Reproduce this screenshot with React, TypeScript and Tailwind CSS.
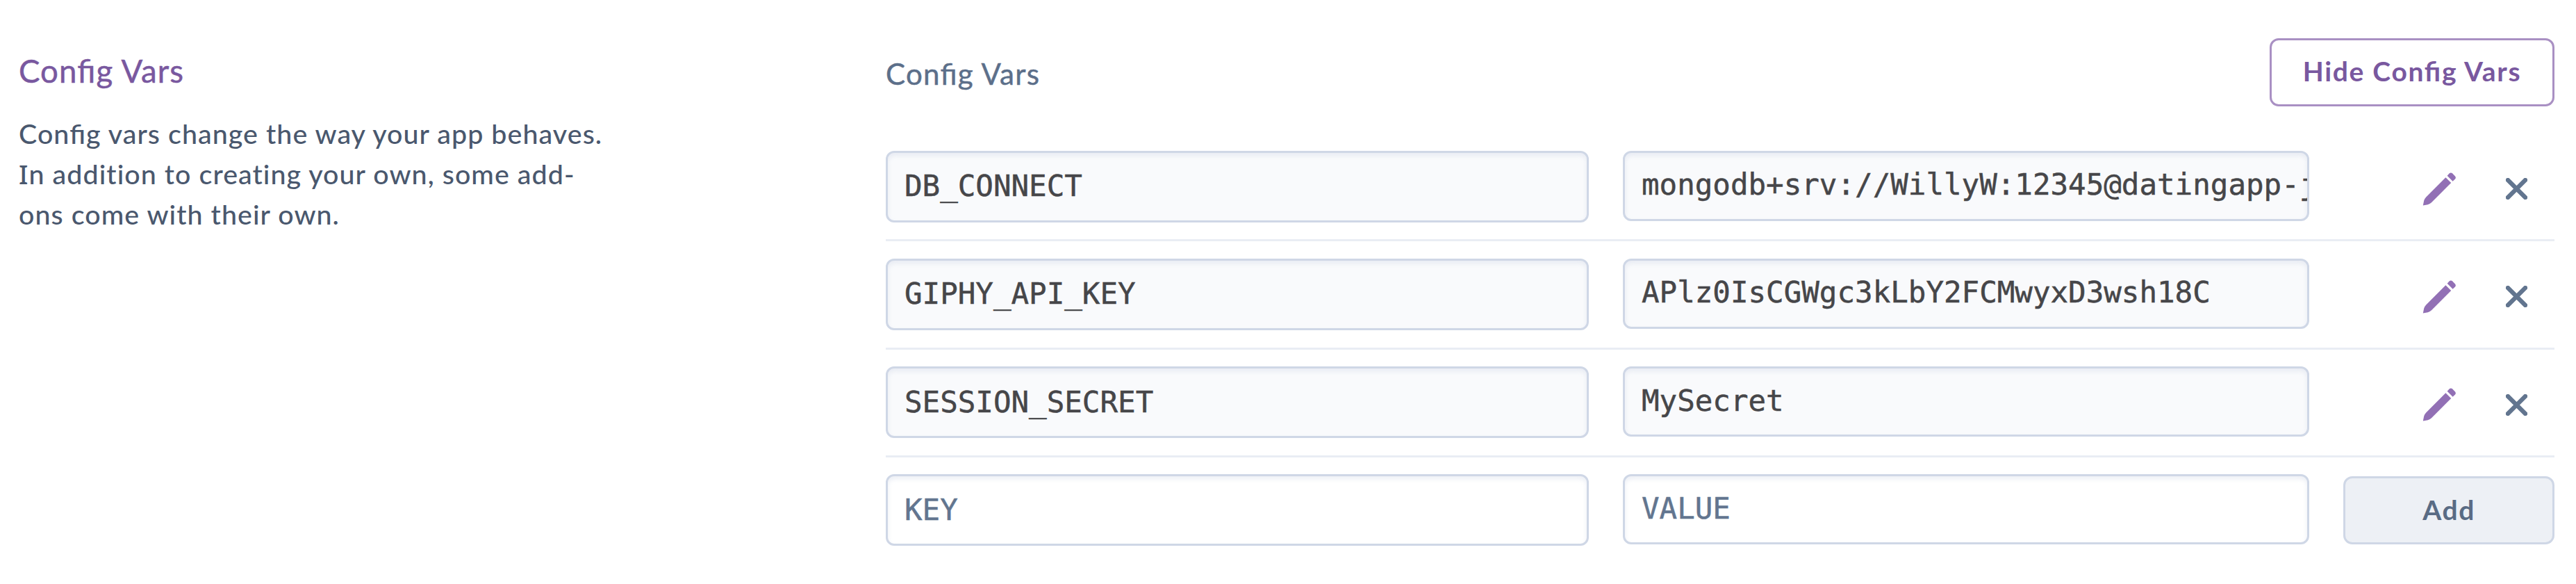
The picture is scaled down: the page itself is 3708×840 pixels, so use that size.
type ConfigVar = { key: string; value: string };

const VARS: ConfigVar[] = [
  { key: "DB_CONNECT", value: "mongodb+srv://WillyW:12345@datingapp-j" },
  { key: "GIPHY_API_KEY", value: "APlz0IsCGWgc3kLbY2FCMwyxD3wsh18C" },
  { key: "SESSION_SECRET", value: "MySecret" },
];

const FIELD =
  "box-border flex shrink-0 items-center overflow-hidden whitespace-pre rounded-[12px] border-[3px] border-[#cfd7e6] pl-[24px] font-['DejaVu_Sans_Mono',monospace] text-[42.5px] leading-[50px] [-webkit-text-stroke:0.5px] shadow-[inset_0_4px_6px_rgba(207,215,230,0.4)]";

// Keeps the "fi" ligature while the surrounding text is letter-spaced.
function Config() {
  return <span className="[font-feature-settings:'liga']">Config</span>;
}

function Field({ text, kind, filled }: { text: string; kind: "key" | "value"; filled: boolean }) {
  const size = kind === "key" ? "h-[103px] w-[1012px]" : "h-[101px] w-[988px] pb-[2px]";
  const tone = filled ? "bg-[#f9fafc] text-[#464649]" : "bg-white text-[#62758f]";
  return <div className={`${FIELD} ${size} ${tone}`}>{text}</div>;
}

function PencilIcon() {
  return (
    <svg className="h-[50px] w-[50px]" viewBox="0 0 50 50">
      <g fill="#9270b5">
        <path d="M0.8 48.4 L2.2 41.6 Q3 38.6 5.2 36.4 L33.4 8.2 L41.2 16 L13 44.2 Q10.8 46.4 7.8 47.2 Z" />
        <path d="M35.6 5.8 L38.6 2.6 Q40.9 0.5 43.2 2.6 L46.8 6.2 Q48.9 8.5 46.8 10.8 L43.6 13.8 Z" />
      </g>
    </svg>
  );
}

function CrossIcon() {
  return (
    <svg className="h-[31px] w-[31px]" viewBox="0 0 31 31">
      <path d="M3 3 L28 28 M28 3 L3 28" stroke="#62758f" strokeWidth="6.2" strokeLinecap="square" fill="none" />
    </svg>
  );
}

function Row({ item }: { item: ConfigVar }) {
  return (
    <div className="box-border flex h-[155.3px] items-start border-b-[3px] border-[#e9edf4] pt-[24.6px]">
      <Field text={item.key} kind="key" filled />
      <div className="ml-[49px] flex">
        <Field text={item.value} kind="value" filled />
      </div>
      <div className="ml-[163px] flex h-[110px] items-center">
        <PencilIcon />
        <div className="ml-[70px] flex">
          <CrossIcon />
        </div>
      </div>
    </div>
  );
}

export default function App() {
  return (
    <div className="flex h-[840px] w-[3708px] overflow-hidden bg-white font-['Lato',sans-serif]">
      <aside className="w-[1275px] shrink-0 pl-[27px] pt-[73px]">
        <h2 className="text-[45.6px] leading-[58px] tracking-[1.1px] text-[#79589f] [-webkit-text-stroke:0.5px]">
          <Config /> Vars
        </h2>
        <p className="mt-[32px] whitespace-nowrap text-[39.4px] font-medium leading-[58px] tracking-[1.05px] text-[#4a586e]">
          <Config /> vars change the way your app behaves.
          <br />
          <span className="font-['Noto_Sans',sans-serif] text-[38px] leading-none">I</span>n addition to creating your own, some add-
          <br />
          ons come with their own.
        </p>
      </aside>
      <main className="w-[2402px] shrink-0 pt-[55px]">
        <header className="flex h-[98px] items-start justify-between">
          <h3 className="pt-[22px] text-[42px] leading-[58px] tracking-[1.3px] text-[#5c6f8a] [-webkit-text-stroke:0.5px]">
            <Config /> Vars
          </h3>
          <button className="box-border flex h-[98px] w-[410px] items-center justify-center rounded-[13px] border-[3px] border-[#a990c3] pb-[3px] text-[39px] font-bold tracking-[1.7px] text-[#79589f]">
            <span>
              Hide <Config /> Vars
            </span>
          </button>
        </header>
        <div className="pt-[39px]">
          {VARS.map((item) => (
            <Row key={item.key} item={item} />
          ))}
          <div className="flex items-start pt-[24.6px]">
            <Field text="KEY" kind="key" filled={false} />
            <div className="ml-[49px] flex">
              <Field text="VALUE" kind="value" filled={false} />
            </div>
            <button className="ml-[49px] mt-[3px] box-border flex h-[98px] w-[304px] items-center justify-center rounded-[13px] border-[3px] border-[#cfd7e6] bg-[#edf0f5] pb-[3px] text-[39px] font-bold tracking-[1.6px] text-[#596b84]">
              Add
            </button>
          </div>
        </div>
      </main>
    </div>
  );
}
